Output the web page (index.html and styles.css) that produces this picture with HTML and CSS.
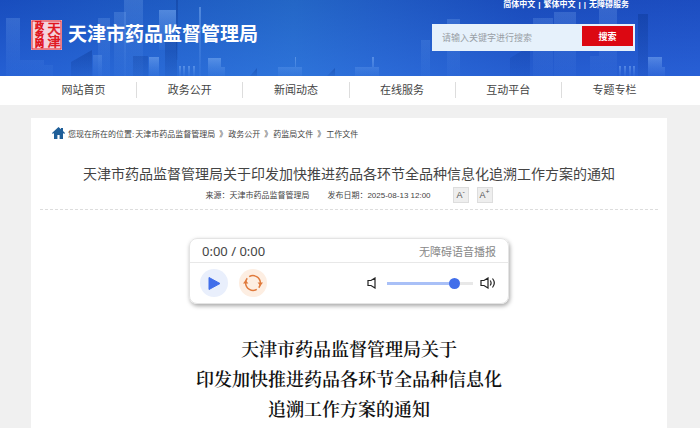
FILE: index.html
```html
<!DOCTYPE html>
<html lang="zh-CN">
<head>
    <meta charset="UTF-8">
    <meta name="viewport" content="width=device-width, initial-scale=1.0">
    <title>天津市药品监督管理局</title>
    <link rel="stylesheet" href="styles.css">
</head>
<body>
    <header class="header">
        <!-- 城市背景 -->
        <svg class="skyline" viewBox="0 0 700 76" preserveAspectRatio="xMidYMax slice" aria-hidden="true">
            <defs>
                <linearGradient id="tower" x1="0" y1="0" x2="0" y2="1">
                    <stop offset="0" stop-color="#9cc8ff" stop-opacity=".4"/>
                    <stop offset="1" stop-color="#6fa6f5" stop-opacity=".08"/>
                </linearGradient>
                <linearGradient id="far" x1="0" y1="0" x2="0" y2="1">
                    <stop offset="0" stop-color="#9cc8ff" stop-opacity=".2"/>
                    <stop offset="1" stop-color="#6fa6f5" stop-opacity=".05"/>
                </linearGradient>
                <linearGradient id="dark" x1="0" y1="0" x2="0" y2="1">
                    <stop offset="0" stop-color="#0a3590" stop-opacity=".4"/>
                    <stop offset="1" stop-color="#0a3590" stop-opacity=".1"/>
                </linearGradient>
            </defs>
            <g fill="url(#tower)">
                <path d="M159 10h17v40h-17z"/>
                <path d="M149 57h10v19h-10z"/>
                <path d="M208 58h13v18h-13zM220 67h5v9h-5z"/>
                <path d="M278 67h24v9h-24zM295 57h1v19h-1z"/>
                <path d="M355 67h24v9h-24zM372 57h2v19h-2z"/>
                <path d="M199 7h2v69h-2z"/>
                <path d="M648 57h14v19h-14zM657 67h8v9h-8z"/>
                <path d="M179 66h2v10h-2zM183 66h2v10h-2zM188 66h2v10h-2zM193 66h2v10h-2z"/>
                <path d="M619 66h2v10h-2zM624 66h2v10h-2zM629 66h2v10h-2zM633 66h2v10h-2z"/>
            </g>
            <g fill="url(#far)">
                <path d="M6 18h14v58H6zM20 60h24v16H20zM38 65h15v11H38z"/>
                <path d="M98 18h12v58H98zM114 12h12v64h-12z"/>
                <path d="M124 0h19v76h-19z"/>
                <path d="M93 55h9v21h-9z"/>
                <path d="M447 19h13v57h-13zM421 40h9v36h-9z"/>
                <path d="M533 18h20v58h-20zM554 12h22v64h-22z"/>
                <path d="M599 8h18v68h-18zM590 56h11v20h-11z"/>
            </g>
            <g fill="url(#dark)">
                <path d="M71 62l21-12v26H71z"/>
                <path d="M176 0h2v60h-2z"/>
                <path d="M133 56h15v20h-15zM165 40h12v36h-12z"/>
                <path d="M250 76l7-8v8zM327 76l8-8v8z"/>
                <path d="M510 58l20-12v30h-20zM638 14h10v62h-10z"/>
            </g>
        </svg>
        <div class="header-inner">
            <a class="brand" href="#">
                <svg class="seal" viewBox="0 0 31 30" role="img" aria-label="天津政务网">
                    <rect width="31" height="30" fill="#f5d3dc"/>
                    <rect x="1" y="1" width="29" height="28" fill="none" stroke="#e0262f" stroke-width="1"/>
                    <g fill="#e0141c" stroke="#e0141c" stroke-width=".6" text-anchor="middle">
                        <text class="seal-text" x="8" y="15" font-size="9">政务网</text>
                        <text class="seal-text" x="22" y="15" font-size="13">天津</text>
                    </g>
                </svg>
                <span class="site-name">天津市药品监督管理局</span>
            </a>
            <div class="header-tools">
                <div class="top-links">
                    <a href="#">简体中文</a><span>|</span><a href="#">繁体中文</a><span>|</span><span>|</span><a href="#">无障碍服务</a>
                </div>
                <form class="search">
                    <input type="text" placeholder="请输入关键字进行搜索" aria-label="搜索关键字">
                    <button type="button">搜索</button>
                </form>
            </div>
        </div>
    </header>

    <nav class="nav">
        <ul>
            <li><a href="#">网站首页</a></li>
            <li><a href="#">政务公开</a></li>
            <li><a href="#">新闻动态</a></li>
            <li><a href="#">在线服务</a></li>
            <li><a href="#">互动平台</a></li>
            <li><a href="#">专题专栏</a></li>
        </ul>
    </nav>

    <main class="content">
        <div class="breadcrumb">
            <svg class="home" viewBox="0 0 13 12" aria-hidden="true">
                <path fill="#1f5f99" d="M6.5 0L0 6l.8.9L2 5.9V12h3.4V8h2.2v4H11V5.900l1.200 1 .8-.9-2-1.900V1H9v1.300z"/>
            </svg>
            <span>您现在所在的位置:</span>
            <a href="#">天津市药品监督管理局</a><i>》</i>
            <a href="#">政务公开</a><i>》</i>
            <a href="#">药监局文件</a><i>》</i>
            <a href="#">工作文件</a>
        </div>

        <h1 class="title">天津市药品监督管理局关于印发加快推进药品各环节全品种信息化追溯工作方案的通知</h1>
        <div class="meta">
            <span class="source">来源：天津市药品监督管理局</span>
            <span class="date">发布日期：2025-08-13 12:00</span>
            <button type="button" aria-label="缩小字号">A<sup>-</sup></button>
            <button type="button" aria-label="放大字号">A<sup>+</sup></button>
        </div>

        <!-- 语音播报 -->
        <section class="player">
            <div class="player-head">
                <span class="time">0:00 / 0:00</span>
                <span class="player-name">无障碍语音播报</span>
            </div>
            <div class="player-body">
                <button class="round play" type="button" aria-label="播放">
                    <svg width="28" height="28" viewBox="0 0 28 28"><path fill="#416eea" stroke="#416eea" stroke-linejoin="round" d="M9 8.500v12L20 14.500z"/></svg>
                </button>
                <button class="round loop" type="button" aria-label="循环">
                    <svg width="28" height="28" viewBox="0 0 28 28">
                        <g fill="none" stroke="#e07a3c" stroke-width="1.500">
                            <path d="M10.200 7.600A7.500 7.500 0 0 1 21.400 14"/>
                            <path d="M17.800 20.400A7.500 7.500 0 0 1 6.600 14"/>
                            <path d="M6.600 14A7.500 7.500 0 0 1 8.200 9.300M21.400 14A7.500 7.500 0 0 1 19.800 18.700"/>
                        </g>
                        <path fill="#e07a3c" d="M18.600 13.500h5.400l-2.600 3.600zM4 14.500h5.400L6.600 10.900z"/>
                    </svg>
                </button>
                <svg class="speaker low" width="10" height="12" viewBox="0 0 10 12" aria-hidden="true">
                    <path fill="none" stroke="#222" stroke-width="1.200" d="M8 1v10L4 8.500H1v-5h3z"/>
                </svg>
                <input class="volume" type="range" min="0" max="100" value="83" aria-label="音量">
                <svg class="speaker" width="16" height="12" viewBox="0 0 16 12" aria-hidden="true">
                    <g fill="none" stroke="#222" stroke-width="1.200">
                        <path d="M8 1v10L4 8.500H1v-5h3z"/>
                        <path d="M10.200 3.500q1.800 2.500 0 5M12.500 1.500q3.600 4.500 0 9"/>
                    </g>
                </svg>
            </div>
        </section>

        <h2 class="doc-title">天津市药品监督管理局关于<br>印发加快推进药品各环节全品种信息化<br>追溯工作方案的通知</h2>
    </main>
</body>
</html>
```

FILE: styles.css
```css
* {
    box-sizing: border-box;
}
body {
    margin: 0;
    background-color: #f0f0f0;
    color: #444;
    font-family: "Liberation Sans", "Noto Sans CJK SC", sans-serif;
    font-size: 8px;
}
a {
    color: inherit;
    text-decoration: none;
}
button, input {
    font-family: inherit;
    margin: 0;
}
button {
    cursor: pointer;
}

/* 页头 */
.header {
    position: relative;
    height: 76px;
    overflow: hidden;
    background: linear-gradient(to bottom, rgba(20, 70, 175, 0.3), rgba(50, 115, 230, 0.45)),
        linear-gradient(to right, #1a50c4, #2a74d0 42%, #2664cc 55%, #1c4dc0 75%, #2050c8);
}
.skyline {
    position: absolute;
    left: 0;
    top: 0;
    width: 100%;
    height: 100%;
}
.header-inner {
    position: relative;
    display: flex;
    justify-content: space-between;
    padding: 0 65px 0 31px;
    color: #fff;
}
.brand {
    display: flex;
    align-items: center;
    gap: 6px;
    height: 70px;
}
.seal {
    width: 31px;
    height: 30px;
}
.seal-text {
    writing-mode: vertical-rl;
}
.site-name {
    font-size: 19px;
    font-weight: bold;
    line-height: 28px;
}
.header-tools {
    width: 203px;
}
.top-links {
    display: flex;
    justify-content: flex-end;
    gap: 3px;
    height: 24px;
    padding-right: 6px;
    font-weight: bold;
    line-height: 10px;
}
.search {
    display: flex;
    padding: 2px;
    height: 27px;
    background-color: #e6f1fb;
}
.search input {
    flex: 1;
    min-width: 0;
    padding: 0 8px;
    border: 0;
    outline: 0;
    background: none;
    font-size: 9px;
}
.search input::placeholder {
    color: #999fa6;
}
.search button {
    width: 51px;
    height: 20px;
    padding: 0;
    border: 0;
    background-color: #dc0812;
    color: #fff;
    font-size: 9px;
    font-weight: bold;
}

/* 导航 */
.nav {
    background-color: #fff;
    padding: 0 33px 0 31px;
}
.nav ul {
    display: flex;
    margin: 0;
    padding: 6px 0 7px;
    list-style: none;
}
.nav li {
    flex: 1;
    text-align: center;
    font-size: 11px;
    line-height: 16px;
}
.nav li + li {
    border-left: 1px solid #ddd;
}

/* 正文 */
.content {
    margin: 13px 33px 0 31px;
    padding: 8px 9px 0;
    min-height: 310px;
    background-color: #fff;
}
.breadcrumb {
    display: flex;
    align-items: center;
    padding-left: 12px;
    height: 14px;
}
.home {
    width: 13px;
    height: 12px;
    margin-right: 3px;
}
.breadcrumb span {
    margin-right: 1px;
}
.breadcrumb i {
    width: 13px;
    padding-left: 4px;
    font-style: normal;
}
.title {
    margin: 24px 0 0;
    font-size: 14px;
    font-weight: normal;
    line-height: 20px;
    text-align: center;
}
.meta {
    display: flex;
    justify-content: center;
    align-items: center;
    height: 26px;
    padding-bottom: 4px;
    border-bottom: 1px dashed #ddd;
}
.date {
    margin: 0 22px 0 18px;
}
.meta button {
    width: 16px;
    height: 16px;
    padding: 0;
    border: 1px solid #ddd;
    background-color: #eee;
    color: #555;
    font-size: 9px;
    line-height: 12px;
}
.meta button + button {
    margin-left: 8px;
}
.meta sup {
    font-size: 7px;
    line-height: 0;
}

/* 播放器 */
.player {
    width: 320px;
    margin: 28px auto 0;
    border: 1px solid #e4e4e4;
    border-radius: 8px;
    box-shadow: 1px 2px 4px rgba(0, 0, 0, 0.35);
}
.player-head {
    display: flex;
    justify-content: space-between;
    align-items: center;
    height: 24px;
    padding: 0 12px;
    border-bottom: 1px solid #e8e8e8;
}
.time {
    font-family: "Noto Sans", sans-serif;
    font-size: 13px;
    line-height: 20px;
}
.player-name {
    color: #888;
    font-size: 11px;
}
.player-body {
    display: flex;
    align-items: center;
    height: 40px;
    padding: 0 12px 0 10px;
}
.round {
    width: 28px;
    height: 28px;
    padding: 0;
    border: 0;
    border-radius: 50%;
}
.round svg {
    display: block;
}
.play {
    background-color: #e9effc;
}
.loop {
    margin-left: 11px;
    background-color: #fdeee2;
}
.low {
    margin-left: auto;
}
.volume {
    appearance: none;
    width: 86px;
    height: 12px;
    margin: 0 7px 0 10px;
    background: linear-gradient(to right, #a9c0f7 80%, #e8e8e8 80%) center / 100% 3px no-repeat;
}
.volume::-webkit-slider-thumb {
    appearance: none;
    width: 11px;
    height: 11px;
    border-radius: 50%;
    background-color: #416eea;
}

.doc-title {
    margin: 29px 0 0;
    color: #111;
    font-family: "Noto Serif CJK SC", "Source Han Serif SC", SimSun, "Noto Sans CJK SC", serif;
    font-size: 18px;
    font-weight: 600;
    line-height: 30px;
    text-align: center;
}
```
